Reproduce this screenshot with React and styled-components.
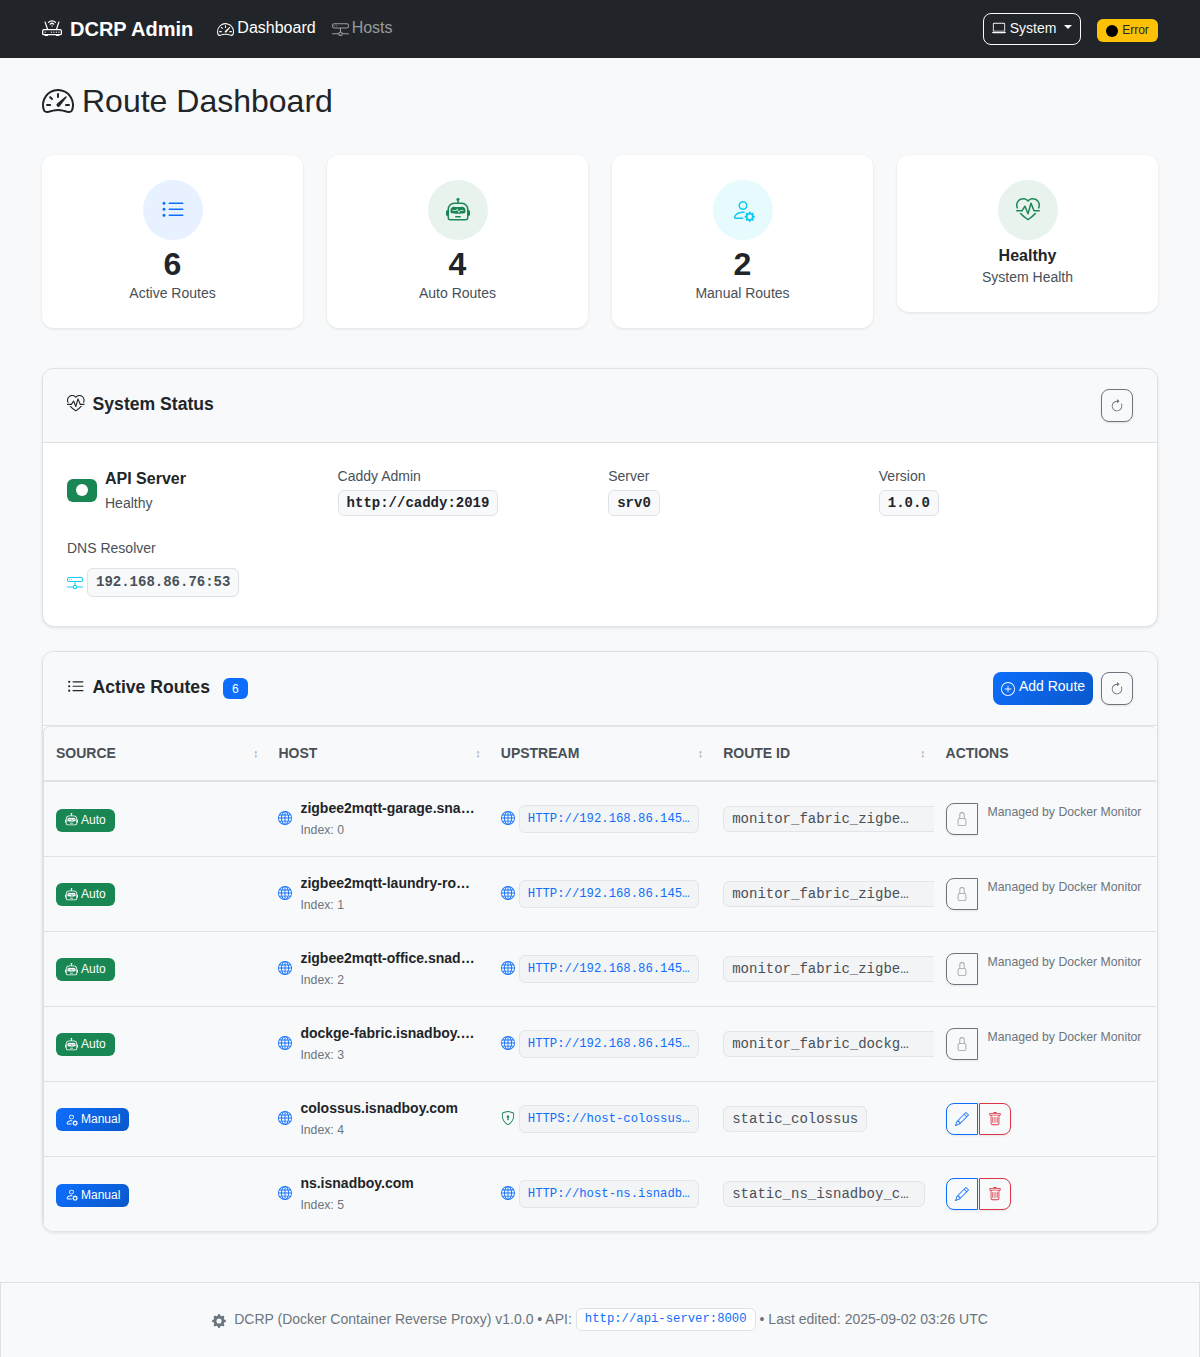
import React from "react";
import styled, { createGlobalStyle } from "styled-components";
import {
  BsArrowClockwise,
  BsGearFill,
  BsGlobe,
  BsHddNetwork,
  BsHeartPulse,
  BsLaptop,
  BsListUl,
  BsLock,
  BsPencil,
  BsPersonGear,
  BsPlusCircle,
  BsRobot,
  BsRouter,
  BsShieldLock,
  BsSpeedometer2,
  BsTrash,
} from "react-icons/bs";

const monoStack = `SFMono-Regular, Menlo, Monaco, Consolas, "Liberation Mono", "Courier New", monospace`;

const GlobalStyle = createGlobalStyle`
  * {
    box-sizing: border-box;
  }

  body {
    margin: 0;
    background-color: #f8f9fa;
    color: #212529;
    font-family: "Liberation Sans", Arial, sans-serif;
    font-size: 16px;
    line-height: 1.5;
  }
`;

const NavBar = styled.nav`
  height: 58px;
  background-color: #212529;
  display: flex;
  align-items: center;
  padding: 0 42px;
`;

const Brand = styled.div`
  display: flex;
  align-items: center;
  gap: 8px;
  color: #ffffff;
  font-size: 20px;
  font-weight: bold;
  margin-right: 24px;
`;

const NavLink = styled.a`
  display: flex;
  align-items: center;
  gap: 3px;
  margin-right: 16px;
  margin-top: -3px;
  color: ${(props) => (props.$active ? "#ffffff" : "rgba(255, 255, 255, 0.55)")};

  svg {
    margin-top: 4px;
  }
`;

const NavRight = styled.div`
  margin-left: auto;
  display: flex;
  align-items: center;
  gap: 16px;
`;

const ThemeButton = styled.button`
  width: 98px;
  height: 32px;
  display: flex;
  align-items: center;
  justify-content: center;
  gap: 4px;
  background: transparent;
  border: 1px solid #f8f9fa;
  border-radius: 8px;
  color: #f8f9fa;
  font-family: inherit;
  font-size: 14px;
  padding: 0 0 2px;

  &::after {
    content: "";
    margin-left: 4px;
    margin-top: -3px;
    border-top: 4px solid #f8f9fa;
    border-left: 4px solid transparent;
    border-right: 4px solid transparent;
  }
`;

const ErrorBadge = styled.span`
  width: 61px;
  height: 23px;
  margin-top: 2px;
  display: flex;
  align-items: center;
  justify-content: center;
  gap: 4px;
  background-color: #ffc107;
  border-radius: 6px;
  color: #212529;
  font-size: 12px;
`;

const ErrorDot = styled.i`
  width: 12px;
  height: 12px;
  margin-top: 1px;
  border-radius: 50%;
  background-color: #000000;
`;

const Main = styled.main`
  padding: 24px 42px 0;
`;

const PageTitle = styled.h1`
  display: flex;
  align-items: center;
  gap: 8px;
  margin: 0 0 35px;
  font-size: 32px;
  font-weight: 400;
  line-height: 38px;
`;

const StatGrid = styled.div`
  display: grid;
  grid-template-columns: repeat(4, 1fr);
  gap: 24px;
  align-items: start;
  margin-bottom: 40px;
`;

const StatCard = styled.div`
  background-color: #ffffff;
  border-radius: 12px;
  box-shadow: 0 1px 3px rgba(0, 0, 0, 0.1);
  padding: 25px 25px 24px;
  display: flex;
  flex-direction: column;
  align-items: center;
`;

const StatIcon = styled.div`
  width: 60px;
  height: 60px;
  border-radius: 50%;
  display: flex;
  align-items: center;
  justify-content: center;
  font-size: 24px;
  margin-bottom: 5px;
  color: ${(props) => props.$color};
  background-color: ${(props) => props.$bg};
`;

const StatNumber = styled.div`
  font-size: 32px;
  font-weight: bold;
  line-height: 38px;
`;

const StatWord = styled.div`
  font-size: 16px;
  font-weight: bold;
  line-height: 22px;
`;

const StatLabel = styled.div`
  font-size: 14px;
  line-height: 21px;
  color: #495057;
`;

const Panel = styled.section`
  background-color: #ffffff;
  border: 1px solid #dee2e6;
  border-radius: 12px;
  box-shadow: 0 1px 3px rgba(0, 0, 0, 0.1);
  margin-bottom: 24px;
  overflow: hidden;
`;

const PanelHeader = styled.header`
  height: 74px;
  background-color: #f8f9fa;
  border-bottom: 1px solid #dee2e6;
  display: flex;
  align-items: center;
  padding: 0 24px;
`;

const PanelTitle = styled.h2`
  display: flex;
  align-items: center;
  gap: 8px;
  margin: -3px 0 0;
  font-size: 17.6px;
  font-weight: bold;
  line-height: 22px;
`;

const CountBadge = styled.span`
  width: 25px;
  height: 21px;
  margin-left: 5px;
  margin-top: 3px;
  display: flex;
  align-items: center;
  justify-content: center;
  background-color: #0d6efd;
  border-radius: 6px;
  color: #ffffff;
  font-size: 12px;
  font-weight: 400;
`;

const HeaderActions = styled.div`
  margin-left: auto;
  display: flex;
  align-items: center;
  gap: 8px;
`;

const RefreshButton = styled.button`
  width: 32px;
  height: 33px;
  display: flex;
  align-items: center;
  justify-content: center;
  padding: 0;
  background: transparent;
  border: 1px solid #6c757d;
  border-radius: 8px;
  box-shadow: 0 1px 2px rgba(0, 0, 0, 0.1);
  color: #6c757d;
  font-size: 14px;
`;

const AddButton = styled.button`
  width: 100px;
  height: 33px;
  display: flex;
  align-items: center;
  justify-content: center;
  gap: 4px;
  padding: 0;
  background: linear-gradient(135deg, #0d6efd, #0a58ca);
  border: none;
  border-radius: 8px;
  color: #ffffff;
  font-family: inherit;
  font-size: 14px;

  span {
    margin-top: -5px;
  }
`;

const StatusBody = styled.div`
  padding: 24px;
  height: 183px;
  display: flex;
  flex-direction: column;
  gap: 22px;
`;

const StatusRow = styled.div`
  display: grid;
  grid-template-columns: 270.6px 270.6px 270.6px 1fr;
  height: 49px;
`;

const ApiStatus = styled.div`
  display: flex;
  align-items: center;
  gap: 8px;
`;

const ApiPill = styled.span`
  width: 30px;
  height: 23px;
  margin-bottom: 3px;
  display: flex;
  align-items: center;
  justify-content: center;
  background-color: #198754;
  border-radius: 6px;

  &::before {
    content: "";
    width: 12px;
    height: 12px;
    border-radius: 50%;
    background-color: #ffffff;
  }
`;

const ApiName = styled.div`
  font-weight: bold;
  line-height: 24px;
  margin-top: -2px;
`;

const ApiState = styled.div`
  font-size: 14px;
  line-height: 21px;
  color: #495057;
  margin-top: 2px;
`;

const FieldLabel = styled.div`
  font-size: 14px;
  line-height: 21px;
  color: #495057;
`;

const ColumnLabel = styled(FieldLabel)`
  line-height: 19px;
`;

const ValueCode = styled.code`
  display: inline-block;
  margin-top: 4px;
  padding: 0 8px;
  height: 26px;
  line-height: 24px;
  background-color: #f8f9fa;
  border: 1px solid #dee2e6;
  border-radius: 6px;
  color: #212529;
  font-family: ${monoStack};
  font-size: 14px;
  font-weight: bold;
`;

const DnsLine = styled.div`
  display: flex;
  align-items: center;
  gap: 4px;
  margin-top: 9px;
  color: #0dcaf0;
  font-size: 16px;
`;

const DnsCode = styled(ValueCode)`
  margin-top: 0;
  height: 29px;
  line-height: 27px;
  color: #495057;
`;

const TableWrap = styled.div`
  padding-left: 1px;
  margin-top: 1px;
  background-color: #f8f9fa;
  border-radius: 6px 6px 0 0;
  box-shadow: inset 1px 0 0 #dee2e6, 0 -1px 0 #e4e7ea;
`;

const Table = styled.table`
  width: 1112px;
  table-layout: fixed;
  border-collapse: collapse;
`;

const HeadCell = styled.th`
  height: 54px;
  padding: 0 12px;
  border-bottom: 2px solid #dee2e6;
  text-align: left;
  font-size: 14px;
  font-weight: bold;
  color: #495057;
  text-transform: uppercase;
`;

const HeadInner = styled.div`
  display: flex;
  align-items: center;
  justify-content: space-between;
`;

const SortMark = styled.span`
  color: #9aa1a8;
  font-size: 11px;
  line-height: 14px;
  margin-right: -4px;
  margin-top: -2px;
`;

const Row = styled.tr`
  height: 75px;
  border-bottom: 1px solid #dee2e6;

  &:last-child {
    border-bottom: none;
  }
`;

const Cell = styled.td`
  padding: 0 12px;
  overflow: hidden;
  vertical-align: middle;
`;

const SourceBadge = styled.span`
  display: inline-flex;
  align-items: center;
  gap: 3px;
  height: 23px;
  margin-top: 4px;
  padding: 0 9px 1px;
  border-radius: 6px;
  color: #ffffff;
  font-size: 12px;
  background: ${(props) =>
    props.$manual
      ? "linear-gradient(135deg, #0d6efd, #0a58ca)"
      : "#198754"};
`;

const HostWrap = styled.div`
  display: flex;
  align-items: center;
  gap: 8px;
`;

const HostIcon = styled.span`
  display: flex;
  flex: none;
  font-size: 14px;
  margin-bottom: 2px;
  color: ${(props) => props.$color || "#0d6efd"};
`;

const HostText = styled.div`
  min-width: 0;
  flex: 1;
`;

const HostName = styled.div`
  font-size: 14px;
  font-weight: bold;
  line-height: 21px;
  white-space: nowrap;
  overflow: hidden;
  text-overflow: ellipsis;
`;

const HostIndex = styled.div`
  font-size: 12.25px;
  line-height: 18px;
  margin-top: 2px;
  color: #6c757d;
`;

const UpstreamWrap = styled.div`
  display: flex;
  align-items: center;
  gap: 4px;
`;

const UpstreamCode = styled.code`
  width: 180px;
  height: 28px;
  line-height: 26px;
  padding: 0 8px;
  background-color: #f3f4f6;
  border: 1px solid #e2e5e9;
  border-radius: 6px;
  color: #0d6efd;
  font-family: ${monoStack};
  font-size: 12.25px;
  white-space: nowrap;
  overflow: hidden;
  text-overflow: ellipsis;
`;

const RouteCode = styled.code`
  display: inline-block;
  min-width: ${(props) => (props.$clip ? "240px" : "0")};
  height: 26px;
  line-height: 24px;
  padding: 0 8px;
  background-color: #f3f4f6;
  border: 1px solid #e2e5e9;
  border-radius: 6px;
  color: #495057;
  font-family: ${monoStack};
  font-size: 14px;
  white-space: nowrap;
`;

const RouteText = styled.span`
  display: inline-block;
  max-width: 184px;
  overflow: hidden;
  text-overflow: ellipsis;
  vertical-align: top;
`;

const Managed = styled.div`
  display: flex;
  align-items: flex-start;
  gap: 10px;
`;

const ManagedText = styled.span`
  font-size: 12.25px;
  line-height: 18px;
  color: #6c757d;
  white-space: nowrap;
`;

const ActionGroup = styled.div`
  display: flex;
  gap: 1px;
`;

const ActionButton = styled.button`
  width: 32px;
  height: 32px;
  display: flex;
  align-items: center;
  justify-content: center;
  padding: 0;
  background: transparent;
  font-size: 14px;
  border: 1px solid ${(props) => props.$color};
  color: ${(props) => props.$color};
  border-radius: ${(props) => props.$radius};
  box-shadow: 0 1px 2px rgba(0, 0, 0, 0.08);
`;

const LockButton = styled(ActionButton)`
  flex: none;

  svg {
    opacity: 0.65;
  }
`;

const Footer = styled.footer`
  height: 75px;
  margin-top: 50px;
  padding-bottom: 2px;
  background-color: #f8f9fa;
  border: 1px solid #dee2e6;
  border-bottom: none;
  display: flex;
  align-items: center;
  justify-content: center;
  gap: 4px;
  color: #6c757d;
  font-size: 14px;
`;

const FooterCode = styled.code`
  height: 23px;
  line-height: 21px;
  padding: 0 8px;
  background-color: #ffffff;
  border: 1px solid #dee2e6;
  border-radius: 6px;
  color: #0d6efd;
  font-family: ${monoStack};
  font-size: 12.25px;
`;

const FooterGear = styled(BsGearFill)`
  margin-right: 4px;
  margin-top: 4px;
`;

const routes = [
  { manual: false, host: "zigbee2mqtt-garage.snadboy.com", upstream: "HTTP://192.168.86.145:8080", id: "monitor_fabric_zigbee2mqtt_garage" },
  { manual: false, host: "zigbee2mqtt-laundry-room.snadboy.com", upstream: "HTTP://192.168.86.145:8081", id: "monitor_fabric_zigbee2mqtt_laundry" },
  { manual: false, host: "zigbee2mqtt-office.snadboy.com", upstream: "HTTP://192.168.86.145:8082", id: "monitor_fabric_zigbee2mqtt_office" },
  { manual: false, host: "dockge-fabric.isnadboy.com", upstream: "HTTP://192.168.86.145:5001", id: "monitor_fabric_dockge_fabric" },
  { manual: true, host: "colossus.isnadboy.com", upstream: "HTTPS://host-colossus.isnadboy.com", id: "static_colossus", secure: true },
  { manual: true, host: "ns.isnadboy.com", upstream: "HTTP://host-ns.isnadboy.com:5380", id: "static_ns_isnadboy_com" },
];

const columns = ["Source", "Host", "Upstream", "Route ID", "Actions"];

const App = () => {
  return (
    <>
      <GlobalStyle />
      <NavBar>
        <Brand>
          <BsRouter size={20} />
          DCRP Admin
        </Brand>
        <NavLink $active>
          <BsSpeedometer2 size={17} />
          Dashboard
        </NavLink>
        <NavLink>
          <BsHddNetwork size={17} />
          Hosts
        </NavLink>
        <NavRight>
          <ThemeButton>
            <BsLaptop size={14} />
            System
          </ThemeButton>
          <ErrorBadge>
            <ErrorDot />
            Error
          </ErrorBadge>
        </NavRight>
      </NavBar>

      <Main>
        <PageTitle>
          <BsSpeedometer2 size={32} />
          Route Dashboard
        </PageTitle>

        <StatGrid>
          <StatCard>
            <StatIcon $color="#0d6efd" $bg="#e7f1ff">
              <BsListUl />
            </StatIcon>
            <StatNumber>6</StatNumber>
            <StatLabel>Active Routes</StatLabel>
          </StatCard>
          <StatCard>
            <StatIcon $color="#198754" $bg="#e8f3ee">
              <BsRobot />
            </StatIcon>
            <StatNumber>4</StatNumber>
            <StatLabel>Auto Routes</StatLabel>
          </StatCard>
          <StatCard>
            <StatIcon $color="#0dcaf0" $bg="#e7fafe">
              <BsPersonGear />
            </StatIcon>
            <StatNumber>2</StatNumber>
            <StatLabel>Manual Routes</StatLabel>
          </StatCard>
          <StatCard>
            <StatIcon $color="#198754" $bg="#e8f3ee">
              <BsHeartPulse />
            </StatIcon>
            <StatWord>Healthy</StatWord>
            <StatLabel>System Health</StatLabel>
          </StatCard>
        </StatGrid>

        <Panel>
          <PanelHeader>
            <PanelTitle>
              <BsHeartPulse size={17.6} />
              System Status
            </PanelTitle>
            <HeaderActions>
              <RefreshButton>
                <BsArrowClockwise />
              </RefreshButton>
            </HeaderActions>
          </PanelHeader>
          <StatusBody>
            <StatusRow>
              <ApiStatus>
                <ApiPill />
                <div>
                  <ApiName>API Server</ApiName>
                  <ApiState>Healthy</ApiState>
                </div>
              </ApiStatus>
              <div>
                <ColumnLabel>Caddy Admin</ColumnLabel>
                <ValueCode>http://caddy:2019</ValueCode>
              </div>
              <div>
                <ColumnLabel>Server</ColumnLabel>
                <ValueCode>srv0</ValueCode>
              </div>
              <div>
                <ColumnLabel>Version</ColumnLabel>
                <ValueCode>1.0.0</ValueCode>
              </div>
            </StatusRow>
            <div>
              <FieldLabel>DNS Resolver</FieldLabel>
              <DnsLine>
                <BsHddNetwork />
                <DnsCode>192.168.86.76:53</DnsCode>
              </DnsLine>
            </div>
          </StatusBody>
        </Panel>

        <Panel>
          <PanelHeader>
            <PanelTitle>
              <BsListUl size={17.6} />
              Active Routes
              <CountBadge>6</CountBadge>
            </PanelTitle>
            <HeaderActions>
              <AddButton>
                <BsPlusCircle size={14} />
                <span>Add Route</span>
              </AddButton>
              <RefreshButton>
                <BsArrowClockwise />
              </RefreshButton>
            </HeaderActions>
          </PanelHeader>
          <TableWrap>
            <Table>
              <thead>
                <tr>
                  {columns.map((name, i) => (
                    <HeadCell key={name}>
                      <HeadInner>
                        {name}
                        {i < 4 && <SortMark>↕</SortMark>}
                      </HeadInner>
                    </HeadCell>
                  ))}
                </tr>
              </thead>
              <tbody>
                {routes.map((route, i) => (
                  <Row key={route.id}>
                    <Cell>
                      <SourceBadge $manual={route.manual}>
                        {route.manual ? <BsPersonGear size={13} /> : <BsRobot size={13} />}
                        {route.manual ? "Manual" : "Auto"}
                      </SourceBadge>
                    </Cell>
                    <Cell>
                      <HostWrap>
                        <HostIcon>
                          <BsGlobe />
                        </HostIcon>
                        <HostText>
                          <HostName>{route.host}</HostName>
                          <HostIndex>Index: {i}</HostIndex>
                        </HostText>
                      </HostWrap>
                    </Cell>
                    <Cell>
                      <UpstreamWrap>
                        <HostIcon $color={route.secure ? "#198754" : "#0d6efd"}>
                          {route.secure ? <BsShieldLock /> : <BsGlobe />}
                        </HostIcon>
                        <UpstreamCode>{route.upstream}</UpstreamCode>
                      </UpstreamWrap>
                    </Cell>
                    <Cell>
                      <RouteCode $clip={!route.manual}>
                        <RouteText>{route.id}</RouteText>
                      </RouteCode>
                    </Cell>
                    <Cell>
                      {route.manual ? (
                        <ActionGroup>
                          <ActionButton $color="#0d6efd" $radius="8px 0 0 8px">
                            <BsPencil />
                          </ActionButton>
                          <ActionButton $color="#dc3545" $radius="0 8px 8px 0">
                            <BsTrash />
                          </ActionButton>
                        </ActionGroup>
                      ) : (
                        <Managed>
                          <LockButton $color="#6c757d" $radius="8px 0 0 8px">
                            <BsLock />
                          </LockButton>
                          <ManagedText>Managed by Docker Monitor</ManagedText>
                        </Managed>
                      )}
                    </Cell>
                  </Row>
                ))}
              </tbody>
            </Table>
          </TableWrap>
        </Panel>
      </Main>

      <Footer>
        <FooterGear />
        DCRP (Docker Container Reverse Proxy) v1.0.0 • API:
        <FooterCode>http://api-server:8000</FooterCode>
        • Last edited: 2025-09-02 03:26 UTC
      </Footer>
    </>
  );
};

export default App;
